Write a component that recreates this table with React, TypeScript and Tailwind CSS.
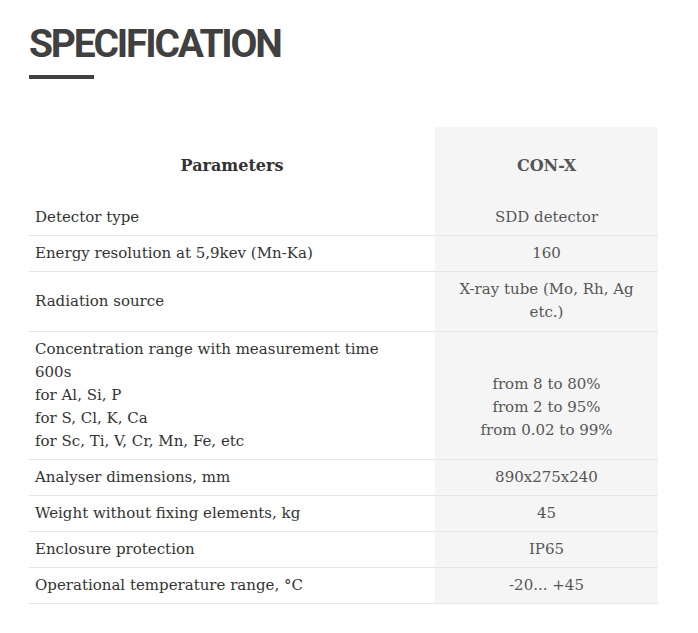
const rows: { label: string[]; value: string[] }[] = [
  { label: ["Detector type"], value: ["SDD detector"] },
  { label: ["Energy resolution at 5,9kev (Mn-Ka)"], value: ["160"] },
  { label: ["Radiation source"], value: ["X-ray tube (Mo, Rh, Ag", "etc.)"] },
  {
    label: [
      "Concentration range with measurement time",
      "600s",
      "for Al, Si, P",
      "for S, Cl, K, Ca",
      "for Sc, Ti, V, Cr, Mn, Fe, etc",
    ],
    value: ["\u00a0", "from 8 to 80%", "from 2 to 95%", "from 0.02 to 99%"],
  },
  { label: ["Analyser dimensions, mm"], value: ["890x275x240"] },
  { label: ["Weight without fixing elements, kg"], value: ["45"] },
  { label: ["Enclosure protection"], value: ["IP65"] },
  { label: ["Operational temperature range, °C"], value: ["-20... +45"] },
];

const App = () => {
  return (
    <div className="min-h-screen bg-white pl-[29px] pt-[22px]">
      {/* Title */}
      <h1 className="font-['Roboto',sans-serif] text-[39px] font-bold leading-[44px] tracking-[-2.2px] text-[#404040]">
        SPECIFICATION
      </h1>
      <div className="mt-[9px] h-[4px] w-[65px] bg-[#404040]" />

      {/* Spec table */}
      <table className="mt-[48px] w-[629px] border-collapse font-['DejaVu_Serif',serif] text-[15px] leading-[23px]">
        <thead>
          <tr>
            <th className="h-[73px] w-[406px] pt-[3px] text-center text-[16px] font-bold text-[#333]">Parameters</th>
            <th className="h-[73px] bg-[#f5f5f5] pt-[3px] text-center text-[16px] font-bold text-[#555]">CON-X</th>
          </tr>
        </thead>
        <tbody>
          {rows.map((row, i) => (
            <tr key={i} className="border-b border-[#e6e6e6]">
              <td className="px-[6px] py-[6px] align-middle text-[#333]">
                {row.label.map((l, j) => (
                  <div key={j}>{l}</div>
                ))}
              </td>
              <td
                className={`bg-[#f5f5f5] px-[6px] pt-[6px] text-center align-middle text-[#555] ${
                  row.value.length === 2 ? "pb-[7px]" : "pb-[6px]"
                }`}
              >
                {row.value.map((v, j) => (
                  <div key={j}>{v}</div>
                ))}
              </td>
            </tr>
          ))}
        </tbody>
      </table>
    </div>
  );
};

export default App;
